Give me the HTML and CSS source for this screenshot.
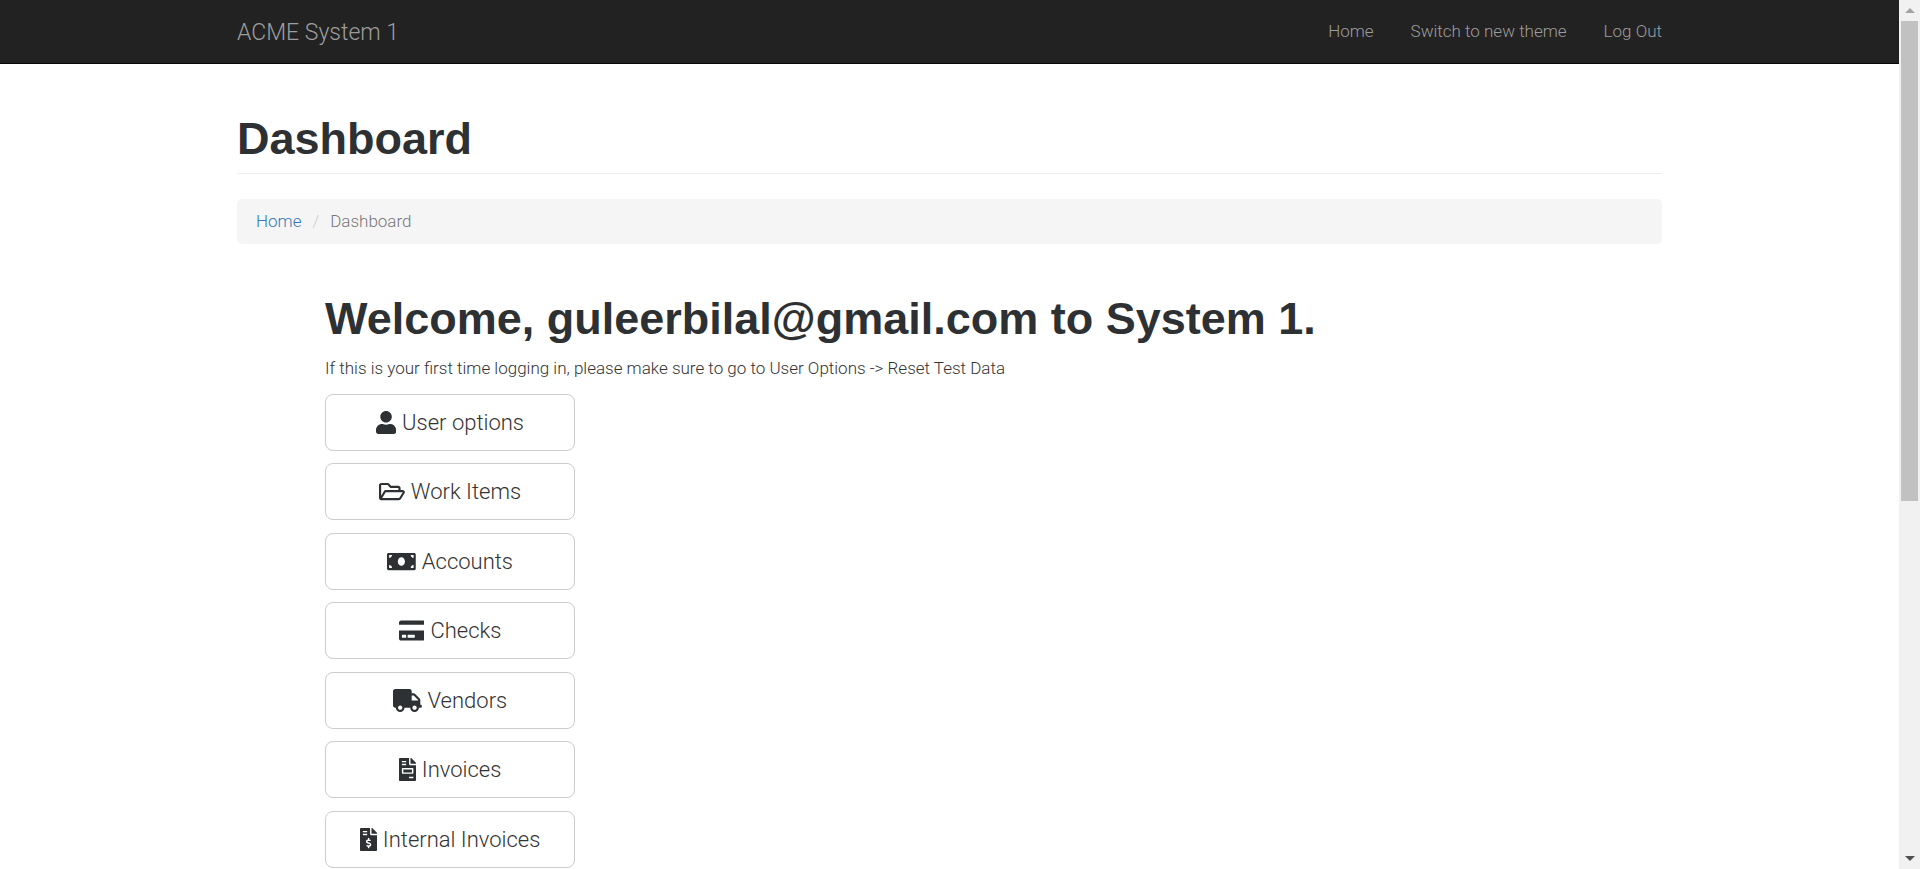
FILE: index.html
```html
<!DOCTYPE html>
<html lang="en">
<head>
<meta charset="utf-8">
<title>ACME System 1 - Dashboard</title>
<link rel="stylesheet" href="styles.css">
</head>
<body>
<div class="page">
  <header class="navbar">
    <nav class="container navbar-inner" aria-label="Main">
      <a class="brand" href="#">ACME System 1</a>
      <ul class="nav-links">
        <li><a href="#">Home</a></li>
        <li><a href="#">Switch to new theme</a></li>
        <li><a href="#">Log Out</a></li>
      </ul>
    </nav>
  </header>
  <main class="container main">
    <h1 class="page-header">Dashboard</h1>
    <ol class="breadcrumb">
      <li><a href="#">Home</a></li>
      <li>Dashboard</li>
    </ol>
    <section class="welcome">
      <h1 class="welcome-title">Welcome, guleerbilal@gmail.com to System 1.</h1>
      <p class="welcome-text">If this is your first time logging in, please make sure to go to User Options -&gt; Reset Test Data</p>
      <div class="menu">
        <button class="btn" type="button"><svg class="icon" viewBox="0 0 448 512" aria-hidden="true"><path d="M224 256c70.7 0 128-57.3 128-128S294.7 0 224 0 96 57.3 96 128s57.3 128 128 128zm89.6 32h-16.7c-22.2 10.2-46.9 16-72.9 16s-50.6-5.8-72.9-16h-16.7C60.2 288 0 348.2 0 422.4V464c0 26.5 21.5 48 48 48h352c26.5 0 48-21.5 48-48v-41.6c0-74.2-60.2-134.4-134.4-134.4z"/></svg>User options</button>
        <button class="btn" type="button"><svg class="icon" viewBox="0 0 576 512" aria-hidden="true"><path d="M527.9 224H480v-48c0-26.5-21.5-48-48-48H272l-64-64H48C21.5 64 0 85.5 0 112v288c0 26.5 21.5 48 48 48h400c16.5 0 31.9-8.5 40.7-22.6l79.9-128c20-31.9-3-73.4-40.7-73.4zM48 118c0-3.3 2.7-6 6-6h134.1l64 64H426c3.3 0 6 2.7 6 6v42H152c-16.8 0-32.4 8.8-41.1 23.2L48 351.4zm400 282H72l77.2-128H528z"/></svg>Work Items</button>
        <button class="btn" type="button"><svg class="icon" viewBox="0 0 640 512" aria-hidden="true"><path d="M608 64H32C14.33 64 0 78.33 0 96v320c0 17.67 14.33 32 32 32h576c17.67 0 32-14.33 32-32V96c0-17.67-14.33-32-32-32zM48 400v-64c35.35 0 64 28.65 64 64H48zm0-224v-64h64c0 35.35-28.65 64-64 64zm272 176c-44.19 0-80-42.99-80-96 0-53.02 35.82-96 80-96s80 42.98 80 96c0 53.03-35.83 96-80 96zm272 48h-64c0-35.35 28.65-64 64-64v64zm0-224c-35.35 0-64-28.65-64-64h64v64z"/></svg>Accounts</button>
        <button class="btn" type="button"><svg class="icon" viewBox="0 0 576 512" aria-hidden="true"><path d="M0 432c0 26.5 21.5 48 48 48h480c26.5 0 48-21.5 48-48V256H0v176zm192-68c0-6.6 5.4-12 12-12h136c6.6 0 12 5.4 12 12v40c0 6.6-5.4 12-12 12H204c-6.6 0-12-5.4-12-12v-40zm-128 0c0-6.6 5.4-12 12-12h72c6.6 0 12 5.4 12 12v40c0 6.6-5.4 12-12 12H76c-6.6 0-12-5.4-12-12v-40zM576 80v48H0V80c0-26.5 21.5-48 48-48h480c26.5 0 48 21.5 48 48z"/></svg>Checks</button>
        <button class="btn" type="button"><svg class="icon" viewBox="0 0 640 512" aria-hidden="true"><path d="M624 352h-16V243.9c0-12.7-5.1-24.9-14.1-33.9L494 110.1c-9-9-21.2-14.1-33.9-14.1H416V48c0-26.5-21.5-48-48-48H48C21.5 0 0 21.5 0 48v320c0 26.5 21.5 48 48 48h16c0 53 43 96 96 96s96-43 96-96h128c0 53 43 96 96 96s96-43 96-96h48c8.8 0 16-7.2 16-16v-32c0-8.8-7.2-16-16-16zM160 464c-26.5 0-48-21.5-48-48s21.5-48 48-48 48 21.5 48 48-21.5 48-48 48zm320 0c-26.5 0-48-21.5-48-48s21.5-48 48-48 48 21.5 48 48-21.5 48-48 48zm80-208H416V144h44.1l99.9 99.9V256z"/></svg>Vendors</button>
        <button class="btn" type="button"><svg class="icon" viewBox="0 0 384 512" aria-hidden="true"><path d="M288 256H96v64h192v-64zm89-151L279.1 7c-4.5-4.5-10.6-7-17-7H256v128h128v-6.1c0-6.3-2.5-12.4-7-16.9zm-153 31V0H24C10.7 0 0 10.7 0 24v464c0 13.3 10.7 24 24 24h336c13.3 0 24-10.7 24-24V160H248c-13.2 0-24-10.8-24-24zM64 72c0-4.42 3.58-8 8-8h80c4.42 0 8 3.58 8 8v16c0 4.42-3.58 8-8 8H72c-4.42 0-8-3.58-8-8V72zm0 64c0-4.42 3.58-8 8-8h80c4.42 0 8 3.58 8 8v16c0 4.42-3.58 8-8 8H72c-4.42 0-8-3.58-8-8v-16zm256 304c0 4.42-3.58 8-8 8h-80c-4.42 0-8-3.58-8-8v-16c0-4.42 3.58-8 8-8h80c4.42 0 8 3.58 8 8v16zm0-200v96c0 8.84-7.16 16-16 16H80c-8.84 0-16-7.16-16-16v-96c0-8.84 7.16-16 16-16h224c8.84 0 16 7.16 16 16z"/></svg>Invoices</button>
        <button class="btn" type="button"><svg class="icon" viewBox="0 0 384 512" aria-hidden="true"><path d="M377 105L279.1 7c-4.5-4.5-10.6-7-17-7H256v128h128v-6.1c0-6.3-2.5-12.4-7-16.9zm-153 31V0H24C10.7 0 0 10.7 0 24v464c0 13.3 10.7 24 24 24h336c13.3 0 24-10.7 24-24V160H248c-13.2 0-24-10.8-24-24zM64 72c0-4.42 3.58-8 8-8h80c4.42 0 8 3.58 8 8v16c0 4.42-3.58 8-8 8H72c-4.42 0-8-3.58-8-8V72zm0 64c0-4.42 3.58-8 8-8h80c4.42 0 8 3.58 8 8v16c0 4.42-3.58 8-8 8H72c-4.42 0-8-3.58-8-8v-16zm144 279.88V440c0 4.42-3.58 8-8 8h-16c-4.42 0-8-3.58-8-8v-24.29c-11.29-.58-22.27-4.52-31.37-11.35-3.9-2.93-4.1-8.77-.57-12.14l11.75-11.21c2.77-2.64 6.89-2.76 10.13-.73 3.87 2.42 8.26 3.72 12.82 3.72h28.11c6.5 0 11.8-5.92 11.8-13.19 0-5.95-3.61-11.19-8.77-12.73l-45-13.5c-18.59-5.58-31.58-23.42-31.58-43.39 0-24.52 19.05-44.44 42.67-45.07V232c0-4.42 3.58-8 8-8h16c4.42 0 8 3.58 8 8v24.29c11.29.58 22.27 4.51 31.37 11.35 3.9 2.93 4.1 8.77.57 12.14l-11.75 11.21c-2.77 2.64-6.89 2.76-10.13.73-3.87-2.43-8.26-3.72-12.82-3.72h-28.11c-6.5 0-11.8 5.92-11.8 13.19 0 5.95 3.61 11.19 8.77 12.73l45 13.5c18.59 5.58 31.58 23.42 31.58 43.39 0 24.53-19.05 44.44-42.67 45.07z"/></svg>Internal Invoices</button>
      </div>
    </section>
  </main>
</div>
<div class="scrollbar" aria-hidden="true">
  <span class="arrow arrow-up"></span>
  <span class="track"><span class="thumb"></span></span>
  <span class="arrow arrow-down"></span>
</div>
</body>
</html>
```
FILE: styles.css
```css
* {
  box-sizing: border-box;
}

body {
  display: flex;
  height: 100vh;
  margin: 0;
  overflow: hidden;
  background: #fff;
  color: #333;
  font-family: Roboto, "Liberation Sans", sans-serif;
  font-size: 17px;
  font-weight: 300;
  line-height: 25px;
}

a {
  color: #337ab7;
  text-decoration: none;
}

h1 {
  margin: 0;
  color: #2e3133;
  font-family: "Liberation Sans", Arial, sans-serif;
  font-size: 45px;
  font-weight: 700;
  line-height: 50px;
}

ul,
ol {
  display: flex;
  margin: 0;
  padding: 0;
  list-style: none;
}

.page {
  flex: 1;
  min-width: 0;
  overflow: hidden;
}

.container {
  max-width: 1463px;
  margin: 0 auto;
  padding: 0 19px;
}

.navbar {
  background: #222;
  border-bottom: 1px solid #080808;
}

.navbar-inner {
  display: flex;
  align-items: center;
  justify-content: space-between;
  min-height: 63px;
}

.navbar a {
  color: #9d9d9d;
}

.brand {
  padding-top: 2px;
  font-size: 23px;
}

.nav-links {
  gap: 37px;
}

.page-header {
  margin-top: 50px;
  padding-bottom: 9px;
  border-bottom: 1px solid #eee;
}

.breadcrumb {
  margin: 25px 0 50px;
  padding: 10px 19px;
  border-radius: 5px;
  background: #f5f5f5;
  color: #777;
}

.breadcrumb li + li::before {
  content: "/";
  padding: 0 11px;
  color: #ccc;
}

.welcome {
  padding-left: 88px;
}

.welcome-text {
  margin: 12px 0 13px;
}

.menu {
  display: flex;
  flex-direction: column;
  align-items: flex-start;
}

.btn {
  display: flex;
  align-items: center;
  justify-content: center;
  gap: 6px;
  width: 250px;
  margin: 0 0 12px;
  padding: 12px 19px;
  border: 1px solid #ccc;
  border-radius: 8px;
  background: #fff;
  color: #333;
  font-family: inherit;
  font-size: 22px;
  font-weight: 300;
  line-height: 31px;
}

.btn:nth-child(even) {
  margin-bottom: 13px;
}

.icon {
  height: 23px;
  fill: #2e3133;
}

.scrollbar {
  display: flex;
  flex-direction: column;
  width: 21px;
  background: #f1f1f1;
}

.arrow {
  display: flex;
  align-items: center;
  justify-content: center;
  height: 21px;
}

.arrow::before {
  content: "";
  border: 5px solid transparent;
}

.arrow-up::before {
  border-top-width: 0;
  border-bottom-color: #a3a3a3;
}

.arrow-down::before {
  border-bottom-width: 0;
  border-top-color: #505050;
}

.track {
  flex: 1;
  padding: 0 2px;
}

.thumb {
  display: block;
  height: 58%;
  background: #c1c1c1;
}
```
